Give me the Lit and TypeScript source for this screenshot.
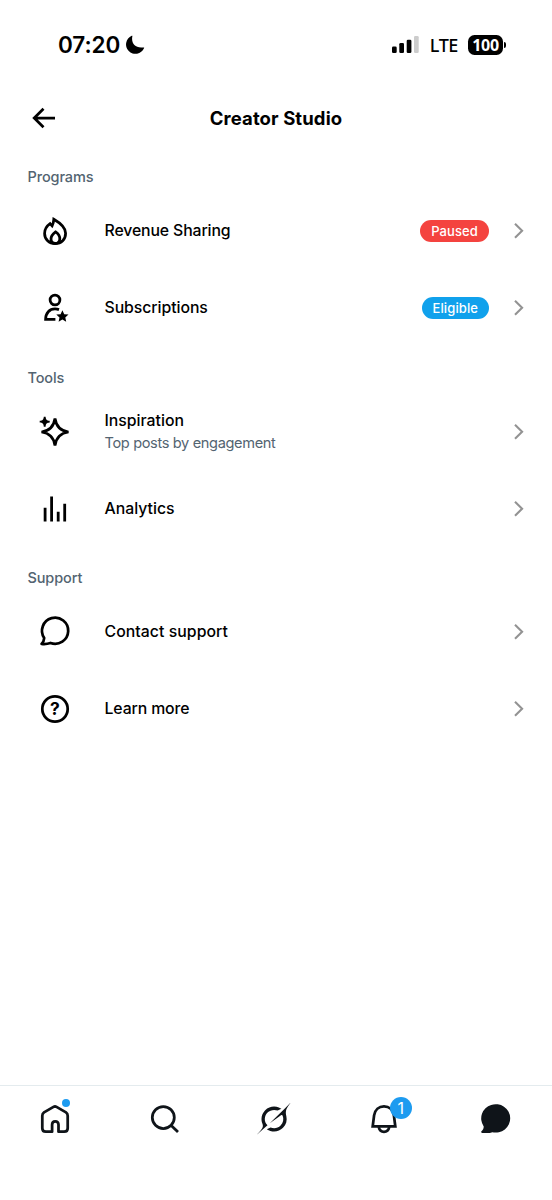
import { LitElement, html, svg, css } from "lit";
import { customElement, property } from "lit/decorators.js";

const glyphs: Record<string, unknown> = {
  flame: svg`<g class="line">
    <path d="M-1.200-11.700C5.500-7.800 10.600-2.600 10.600 2.200c0 6.200-4.300 10.300-10.400 10.300S-10.400 8.400-10.400 2.400C-10.400-1.800-8.400-4.800-4.900-7.300l2 2.200C-1.900-7-1.400-9-1.200-11.700Z"/>
    <path d="M.6.9C3.600 3 4.900 5.300 4.800 8 4.600 10.900 3 12.400.4 12.400S-4 10.900-4 8C-4 5.300-2.200 3 .6.9Z"/></g>`,
  person: svg`<g class="line"><circle cx="0" cy="-8" r="4.900"/>
    <path d="M4 1.600C2.700 1.100 1.400.9 0 .9-5.500.9-9.300 5-9.400 11.400H.4"/></g>
    <path d="M7.400 2.200l1.800 4 4.300.4-3.200 2.900.9 4.300-3.800-2.200-3.800 2.200.9-4.300L1.300 6.600l4.300-.4Z"/>`,
  sparkle: svg`<path class="line" stroke-linejoin="bevel" d="M0-13.500C1.200-5.200 5.200-1.200 13.500 0 5.200 1.200 1.200 5.200 0 13.500-1.200 5.200-5.200 1.200-13.500 0-5.200-1.200-1.200-5.200 0-13.500Z"/>
    <path d="M-11.200-15.300h1.800c.3 3 1.100 3.800 4.100 4.100v1.800c-3 .3-3.800 1.100-4.100 4.100h-1.800c-.3-3-1.100-3.800-4.100-4.100v-1.800c3-.3 3.800-1.100 4.100-4.100Z"/>`,
  bars: svg`<path d="M-11.300-1.300h2.800v13.800h-2.800ZM-4.800-12.500H-2v25h-2.800ZM1.800 2.700h2.800v9.800H1.800ZM8.300-5.300h2.800v17.800H8.300Z"/>`,
  bubble: svg`<path class="line round" d="M-10.800 6A13.100 13.100 0 1 1-4.500 11C-7.500 12-10.200 12.300-13.400 11.900-11.600 10-10.900 8-10.800 6Z"/>`,
  help: svg`<circle class="line" r="12.700"/><text class="mark" x="0" y="6.200" text-anchor="middle">?</text>`,
  back: svg`<path class="line" d="M11 0H-9.500M-.5-9.300-9.800 0l9.300 9.300"/>`,
  chevron: svg`<path class="thin" d="M-4-7.300 3.100-.3-4 6.700"/>`,
  home: svg`<path class="line round" d="M-2.900 12.700H-9.200C-11.500 12.700-12.700 11.500-12.700 9.200V-3.200C-12.700-4.900-12.300-5.700-11-6.600L-1.500-12.100Q0-12.900 1.500-12.100L11-6.600C12.300-5.700 12.700-4.900 12.700-3.200V9.200C12.700 11.500 11.500 12.700 9.200 12.700H3.500V5.800C3.500 3.500 2.200 2.300.3 2.300S-2.900 3.500-2.900 5.800Z"/>`,
  search: svg`<g class="line"><circle cx="-1.700" cy="-1.500" r="11"/><path d="M6.200 6.400 13 13.100"/></g>`,
  grok: svg`<path transform="translate(-17.200 -16.200) scale(1.020 1)" d="M12.745 20.540l10.970-8.190c.539-.4 1.307-.244 1.564.38 1.349 3.288.746 7.241-1.938 9.955-2.683 2.714-6.417 3.310-9.830 1.954l-3.728 1.745c5.347 3.697 11.840 2.782 15.898-1.324 3.219-3.255 4.216-7.692 3.284-11.693l.008.009c-1.351-5.878.332-8.227 3.782-13.031L33 0l-4.540 4.590v-.014L12.743 20.544m-2.263 1.987c-3.837-3.707-3.175-9.446.1-12.755 2.420-2.449 6.388-3.448 9.852-1.979l3.720-1.737c-.67-.49-1.530-1.017-2.515-1.387-4.455-1.854-9.789-.931-13.410 2.728-3.483 3.523-4.579 8.940-2.697 13.561 1.405 3.454-.899 5.898-3.220 8.364C1.490 30.200.666 31.074 0 32l10.478-9.466"/>`,
  bell: svg`<g class="line"><path d="M-11.300 7.400-9.900-3.600C-9.100-9.400-5-12.700 0-12.700S9.100-9.400 9.900-3.600L11.300 7.400Z"/>
    <path d="M-5.300 8C-4.600 11.100-2.800 12.800 0 12.800S4.600 11.100 5.300 8"/></g>`,
  chat: svg`<path transform="translate(1.700 0)" d="M-12 7.400A14.500 14.200 0 1 1-3.500 13.200C-6 14.100-9.500 14.200-13.400 13.900-14.500 13.800-14.900 12.900-14.200 12.200-12.700 10.700-11.900 9.400-12 7.400Z"/>`,
};

@customElement("ui-glyph")
class UiGlyph extends LitElement {
  @property() name = "";
  static styles = css`
    :host { display: block; width: 40px; height: 40px; flex: none; }
    svg { display: block; overflow: visible; fill: currentColor; }
    .line { fill: none; stroke: currentColor; stroke-width: 2.75; }
    .thin { fill: none; stroke: currentColor; stroke-width: 2.1; }
    .round { stroke-linejoin: round; }
    .mark { font: 700 17.5px Inter, sans-serif; }
  `;
  render() {
    return html`<svg width="40" height="40" viewBox="-20 -20 40 40">${glyphs[this.name]}</svg>`;
  }
}

interface Item { icon: string; label: string; track: string; note?: string; tag?: string; tone?: string; }

const sections: { title: string; items: Item[] }[] = [
  { title: "Programs", items: [
    { icon: "flame", label: "Revenue Sharing", track: "tight", tag: "Paused", tone: "red" },
    { icon: "person", label: "Subscriptions", track: "snug", tag: "Eligible", tone: "blue" },
  ] },
  { title: "Tools", items: [
    { icon: "sparkle", label: "Inspiration", track: "", note: "Top posts by engagement" },
    { icon: "bars", label: "Analytics", track: "" },
  ] },
  { title: "Support", items: [
    { icon: "bubble", label: "Contact support", track: "loose" },
    { icon: "help", label: "Learn more", track: "tight" },
  ] },
];

@customElement("app-root")
class AppRoot extends LitElement {
  static styles = css`
    :host { display: flex; flex-direction: column; width: 552px; height: 1200px; background: #fff; color: #000; font-family: Inter, sans-serif; overflow: hidden; }
    * { box-sizing: border-box; }
    .status { height: 90px; padding: 0 46px 0 58px; display: flex; align-items: center; }
    .time { font-size: 22.5px; font-weight: 600; line-height: 30px; letter-spacing: -0.1px; width: 67px; white-space: nowrap; }
    .moon { display: block; }
    .signal { margin-left: auto; }
    .lte { font: 500 18px/30px "Noto Sans", sans-serif; letter-spacing: -0.4px; margin: 0 10px 0 10.5px; }
    .battery { width: 35px; height: 20px; border-radius: 6.5px; background: #000; color: #fff; display: flex; align-items: center; justify-content: center; font: 700 16px/20px "Noto Sans", sans-serif; letter-spacing: -0.3px; }
    .nub { width: 2px; height: 6px; margin-left: 1px; border-radius: 0 2px 2px 0; background: #000; }
    .header { height: 56px; display: grid; grid-template-columns: 88px 1fr 88px; align-items: center; }
    .header ui-glyph { margin-left: 24px; }
    h1 { margin: 0; text-align: center; font-size: 18.5px; line-height: 24px; font-weight: 700; letter-spacing: 0.1px; }
    h2 { margin: 0; height: 46.5px; padding: 21px 28px 0 27.5px; font-size: 14.5px; line-height: 20px; font-weight: 500; letter-spacing: -0.12px; color: #536471; }
    .row { height: 77px; display: flex; align-items: center; padding: 0 13px 0 35px; }
    .text { margin-left: 29.5px; flex: 1; padding-top: 0.5px; }
    .label { font-size: 15.8px; line-height: 22px; font-weight: 550; }
    .tight { letter-spacing: -0.12px; }
    .snug { letter-spacing: -0.06px; }
    .loose { letter-spacing: 0.06px; }
    .note { font-size: 14.6px; line-height: 22px; letter-spacing: -0.36px; color: #536471; }
    .tag { height: 22px; border-radius: 11px; padding: 0 11px; color: #fff; font-size: 13px; font-weight: 500; line-height: 22px; letter-spacing: 0.1px; margin-right: 10px; }
    .red { background: #f4433f; }
    .blue { background: #10a1ec; }
    .row .chev { color: #939393; }
    .tabs { margin-top: auto; height: 115px; border-top: 1px solid #e4ebee; padding: 13px 3px 0 0; display: grid; grid-template-columns: repeat(5, 1fr); justify-items: center; align-items: start; color: #0f1419; }
    .tab { position: relative; }
    .dot { position: absolute; left: 27px; top: 0; width: 8px; height: 8px; border-radius: 50%; background: #1d9bf0; }
    .count { position: absolute; left: 25.600px; top: -2px; width: 22px; height: 22px; border-radius: 50%; background: #1d9bf0; color: #fff; font-size: 16px; line-height: 22px; text-align: center; }
  `;
  render() {
    return html`
      <div class="status">
        <span class="time">07:20</span>
        <svg class="moon" width="20" height="20" viewBox="0 0 20 20"><path d="M7.400 1C5.800 8.200 10.200 13.800 18.600 12.400 19.200 12.300 19.300 12.800 19 13.300A9.400 9.400 0 1 1 6.700.8C7.100.5 7.500.6 7.400 1Z"/></svg>
        <svg class="signal" width="27" height="18" viewBox="0 0 27 18"><rect x="0" y="10.500" width="4.700" height="6.500" rx="1.300"/><rect x="7.300" y="7" width="4.700" height="10" rx="1.300"/><rect x="14.700" y="3.700" width="4.700" height="13.300" rx="1.300"/><rect x="22" y="0" width="4.700" height="17" rx="1.300" fill="#ccc"/></svg>
        <span class="lte">LTE</span><span class="battery">100</span><span class="nub"></span>
      </div>
      <div class="header"><ui-glyph name="back"></ui-glyph><h1>Creator Studio</h1></div>
      ${sections.map((s) => html`<section><h2>${s.title}</h2>
        ${s.items.map((i) => html`<div class="row">
          <ui-glyph name=${i.icon}></ui-glyph>
          <div class="text"><div class="label ${i.track}">${i.label}</div>${i.note ? html`<div class="note">${i.note}</div>` : ""}</div>
          ${i.tag ? html`<span class="tag ${i.tone}">${i.tag}</span>` : ""}
          <ui-glyph class="chev" name="chevron"></ui-glyph>
        </div>`)}</section>`)}
      <nav class="tabs">
        <div class="tab"><ui-glyph name="home"></ui-glyph><span class="dot"></span></div>
        <div class="tab"><ui-glyph name="search"></ui-glyph></div>
        <div class="tab"><ui-glyph name="grok"></ui-glyph></div>
        <div class="tab"><ui-glyph name="bell"></ui-glyph><span class="count">1</span></div>
        <div class="tab"><ui-glyph name="chat"></ui-glyph></div>
      </nav>`;
  }
}
